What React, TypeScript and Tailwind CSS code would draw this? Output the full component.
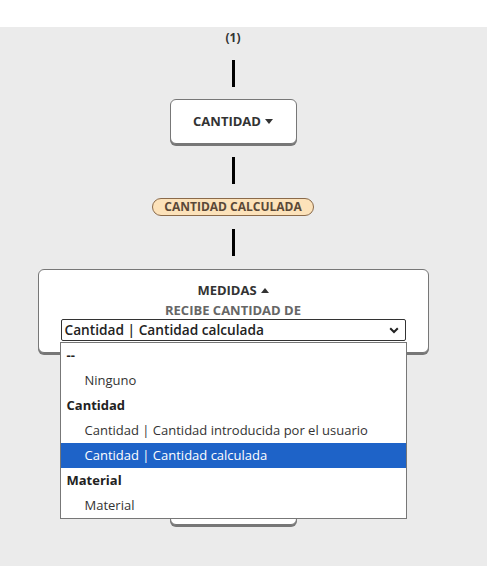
import React from 'react';

const font = { fontFamily: '"Open Sans", "Liberation Sans", sans-serif' };

function Line() {
  return <div className="w-[3px] h-[27px] bg-black" />;
}

function Caret({ up }: { up?: boolean }) {
  return (
    <svg width="8" height="5" viewBox="0 0 8 5" className="ml-[4px]">
      {up ? <path d="M0 5 L4 0 L8 5 Z" fill="#333" /> : <path d="M0 0 L8 0 L4 5 Z" fill="#333" />}
    </svg>
  );
}

function Node({ label }: { label?: string }) {
  return (
    <div className="w-[127px] h-[45px] bg-white border border-[#777] rounded-[6px] shadow-[0_2px_0_#777] flex items-center justify-center">
      {label && (
        <>
          <span className="text-[13px] font-bold text-[#333] leading-none">{label}</span>
          <Caret />
        </>
      )}
    </div>
  );
}

function Pill({ label }: { label: string }) {
  return (
    <div className="h-[18px] px-[11px] rounded-full bg-[#fce2ba] border border-[#8a6a4a] flex items-center">
      <span className="text-[12px] font-bold text-[#5a4838] leading-none">{label}</span>
    </div>
  );
}

const options: { label: string; group?: boolean; active?: boolean }[] = [
  { label: '--', group: true },
  { label: 'Ninguno' },
  { label: 'Cantidad', group: true },
  { label: 'Cantidad | Cantidad introducida por el usuario' },
  { label: 'Cantidad | Cantidad calculada', active: true },
  { label: 'Material', group: true },
  { label: 'Material' },
];

export default function App() {
  return (
    <div style={font} className="w-[487px] h-[566px] bg-white overflow-hidden">
      <div className="h-[27px] bg-white" />
      <div className="h-[539px] bg-[#ebebeb]">
        <div className="w-[466px] flex flex-col items-center pt-[3px]">
          <div className="text-[12px] font-bold text-[#333] leading-[16px]">(1)</div>
          <div className="mt-[14px]"><Line /></div>
          <div className="mt-[12px]"><Node label="CANTIDAD" /></div>
          <div className="mt-[13px]"><Line /></div>
          <div className="mt-[14px]"><Pill label="CANTIDAD CALCULADA" /></div>
          <div className="mt-[13px]"><Line /></div>
          <div className="mt-[13px] relative">
            <div className="w-[391px] bg-white border border-[#777] rounded-[6px] shadow-[0_2px_0_#777] pt-[10px] pb-[11px] px-[22px] flex flex-col items-center">
              <div className="flex items-center h-[20px]">
                <span className="text-[13px] font-bold text-[#333] leading-none">MEDIDAS</span>
                <Caret up />
              </div>
              <div className="text-[13px] font-bold text-[#666] leading-[18px] mt-[1px]">RECIBE CANTIDAD DE</div>
              <div className="w-full h-[22px] border border-[#333] rounded-[2px] bg-white flex items-center justify-between pl-[3px] pr-[6px]">
                <span className="text-[13.7px] font-semibold text-[#222] leading-none">Cantidad | Cantidad calculada</span>
                <svg width="10" height="7" viewBox="0 0 10 7">
                  <path d="M1.2 1.2 L5 5 L8.8 1.2" stroke="#222" strokeWidth="2" fill="none" />
                </svg>
              </div>
            </div>
            <div className="absolute left-[22px] top-[73px] w-[347px] bg-white border border-[#777] z-10">
              {options.map((o, i) => (
                <div
                  key={i}
                  className={`h-[25px] flex items-center text-[13px] leading-none ${o.group ? 'pl-[6px] font-bold text-[#222]' : 'pl-[24px] text-[#333]'} ${o.active ? 'bg-[#1e63c8] text-white' : ''}`}
                >
                  {o.label}
                </div>
              ))}
            </div>
          </div>
          {/* continuation of the chain, hidden behind the open list */}
          <div className="mt-[15px]"><Line /></div>
          <div className="mt-[14px] h-[18px]" />
          <div className="mt-[13px]"><Line /></div>
          <div className="mt-[13px]"><Node /></div>
        </div>
      </div>
    </div>
  );
}
